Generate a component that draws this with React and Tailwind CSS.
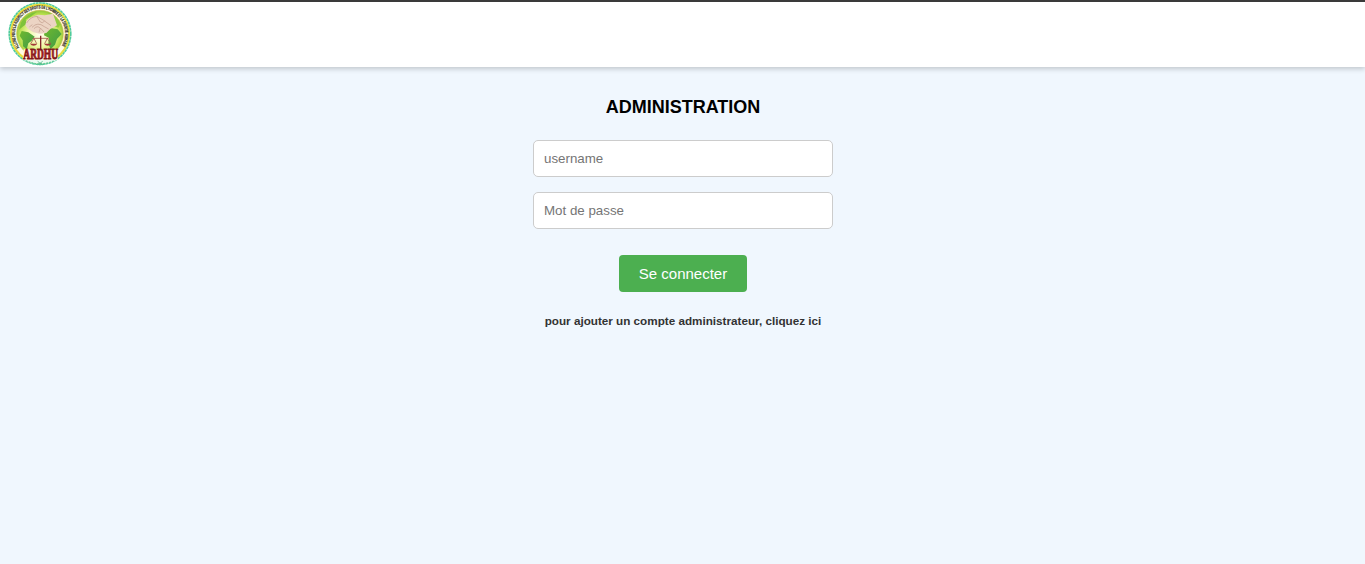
function Logo() {
  return (
    <svg className="block h-16 w-16" viewBox="23 6 192 192" role="img" aria-label="ARDHU">
      <defs>
        <radialGradient id="field" cx="50%" cy="52%" r="52%">
          <stop offset="0" stopColor="#fffff0" />
          <stop offset="0.5" stopColor="#f0f8a4" />
          <stop offset="0.85" stopColor="#b8df4c" />
          <stop offset="1" stopColor="#8fc43a" />
        </radialGradient>
        <linearGradient id="land" x1="0" y1="0" x2="1" y2="1">
          <stop offset="0" stopColor="#6fb82e" />
          <stop offset="1" stopColor="#3d9a48" />
        </linearGradient>
        <path id="ring" d="M57 143 A75 75 0 1 1 181 143" />
      </defs>
      <circle cx="119" cy="101" r="95" fill="#c9f0de" />
      <circle cx="119" cy="101" r="92" fill="none" stroke="#4fcb9c" strokeWidth="5" strokeDasharray="8 2" />
      <circle cx="119" cy="101" r="87" fill="#fffbe4" stroke="#e6dc3c" strokeWidth="6" />
      <circle cx="119" cy="101" r="70" fill="url(#field)" stroke="#c9bd4e" strokeWidth="2" />
      <path d="M62 68 Q78 40 110 35 L91 50 L76 58 L78 72 L67 80 L56 89Z" fill="#7fc23a" />
      <path d="M141 37 Q168 44 180 73 L174 83 L158 76 L147 61 L155 52Z" fill="#90cb3e" />
      <path d="M64 93 L84 97 L103 110 L94 122 L84 130 L79 148 L68 139 L67 121 L58 107Z" fill="url(#land)" />
      <path d="M133 94 L151 84 L172 88 L184 102 L170 117 L164 134 L151 148 L144 131 L146 114 L131 106Z" fill="url(#land)" />
      <path d="M75 76 Q76 57 94 51 L113 44 L133 46 L158 41 L170 76 L150 87 L138 99 L119 101 L99 97 L83 87Z" fill="#ecd4c4" />
      <path d="M79 69 Q90 50 110 49 L130 61 L152 77 M95 82 Q112 64 132 80 L145 87 M101 86 Q111 75 120 85 L116 97 M120 84 L131 96 M109 49 L120 66 Q127 73 133 62 M87 81 L96 74" fill="none" stroke="#c09a8a" strokeWidth="2" />
      <path d="M97 115 H145 M101 115 L91 131 M101 115 L109 131 M141 115 L133 131 M141 115 L151 131" fill="none" stroke="#a1564c" strokeWidth="2.5" />
      <path d="M121 107 V150" stroke="#852628" strokeWidth="4" />
      <path d="M89 131 H111 Q107 137 100 137 Q93 137 89 131 M131 131 H153 Q149 137 142 137 Q135 137 131 131" fill="#a13b38" />
      <text fill="#2b281e" stroke="#2b281e" strokeWidth="0.6" fontFamily="Liberation Sans, sans-serif" fontSize="13.5" fontWeight="700">
        <textPath href="#ring" textLength="318" lengthAdjust="spacingAndGlyphs">ALLONS POUR LE RESPECT DES DROITS DE L'HOMME ET LA DIGNITE HUMAINE</textPath>
      </text>
      <path d="M70 148 H170 L172 180 H67Z" fill="#fff1d8" />
      <path d="M68 180 H170 Q145 191 119 191 Q94 191 68 180Z" fill="#eefaf2" />
      <path d="M76 182 Q119 201 163 182" fill="none" stroke="#63c99b" strokeWidth="4" strokeDasharray="6 3" />
      <path d="M112 184 L126 195 M127 184 L112 195" fill="none" stroke="#50b987" strokeWidth="2.5" />
      <g transform="translate(69 178) scale(1 1.36)">
        <text fill="#b3191e" stroke="#7c191b" strokeWidth="2.2" fontFamily="Liberation Serif, serif" fontSize="34" fontWeight="700" textLength="104" lengthAdjust="spacingAndGlyphs">ARDHU</text>
      </g>
    </svg>
  );
}

export default function App() {
  return (
    <div className="min-h-screen bg-[#f0f7fe] font-['Liberation_Sans',Arial,sans-serif]">
      <header className="h-[67px] border-t-2 border-[#3a3a3a] bg-white pl-2 shadow-[0_2px_5px_rgba(0,0,0,0.2)]">
        <Logo />
      </header>
      <main className="flex flex-col items-center pt-[30px] pl-px">
        <h1 className="text-[18px] leading-[21px] font-bold text-black">ADMINISTRATION</h1>
        <form className="mt-[22px] flex w-[300px] flex-col items-center" onSubmit={(e) => e.preventDefault()}>
          <input type="text" placeholder="username" aria-label="username" className="h-[37px] w-full rounded-[5px] border border-[#ccc] bg-white px-2.5 text-[13.333px] placeholder:text-[#757575]" />
          <input type="password" placeholder="Mot de passe" aria-label="Mot de passe" className="mt-[15px] h-[37px] w-full rounded-[5px] border border-[#ccc] bg-white px-2.5 text-[13.333px] placeholder:text-[#757575]" />
          <button type="submit" className="mt-[26px] h-[37px] w-[128px] rounded-[4px] bg-[#4caf50] text-[15px] leading-[17px] whitespace-nowrap text-white">Se connecter</button>
        </form>
        <a href="#" className="mt-[22px] text-[11.7px] leading-[14px] font-bold whitespace-nowrap text-[#333]">pour ajouter un compte administrateur, cliquez ici</a>
      </main>
    </div>
  );
}
